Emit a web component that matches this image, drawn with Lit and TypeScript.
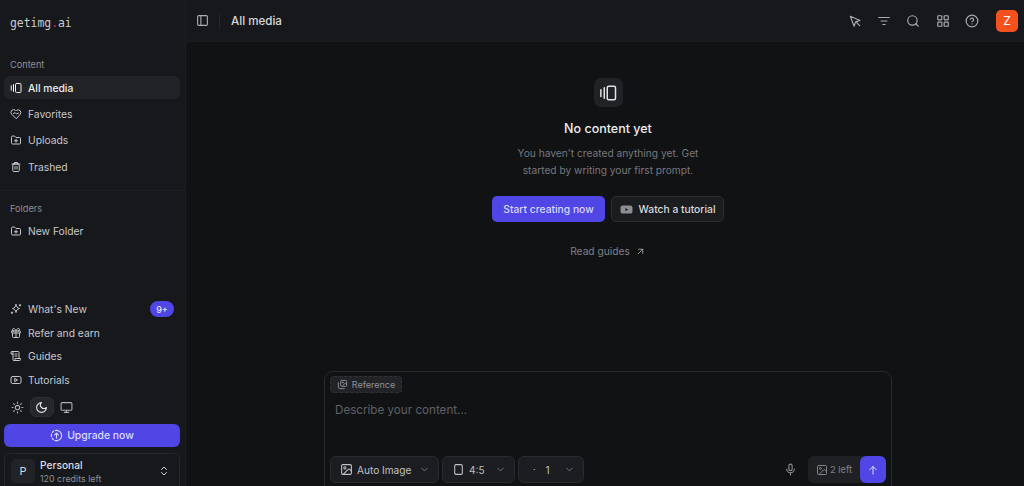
import { LitElement, html, css, svg } from 'lit';
import { customElement } from 'lit/decorators.js';

const icon = (body: unknown, size = 16) => html`<svg class="ic" width=${size} height=${size} viewBox="0 0 24 24" fill="none" stroke="currentColor" stroke-width="2" stroke-linecap="round" stroke-linejoin="round">${body}</svg>`;

const icons = {
  media: svg`<rect x="11" y="3" width="11" height="18" rx="2"/><path d="M7 5v14M2.500 7.500v9"/>`,
  heart: svg`<path d="M12 21 3.500 12.500a5.400 5.400 0 0 1 0-7.600 5.400 5.400 0 0 1 7.600 0l.9.9.9-.9a5.400 5.400 0 0 1 7.600 7.600z"/><path d="m7 11 3-2 3 3 4-2"/>`,
  folder: svg`<path d="M3 6a2 2 0 0 1 2-2h4l3 3h7a2 2 0 0 1 2 2v9a2 2 0 0 1-2 2H5a2 2 0 0 1-2-2z"/><path d="M12 10.500v6M9 13.500h6"/>`,
  trash: svg`<path d="M4 6h16M9 6V3h6v3"/><rect x="5.500" y="6" width="13" height="15" rx="2"/><path d="M10 11v5M14 11v5"/>`,
  spark: svg`<path d="M12 3c.6 4.500 2.500 6.800 7 8-4.500 1.200-6.400 3.500-7 8-.6-4.500-2.500-6.800-7-8 4.500-1.200 6.400-3.500 7-8z"/><path d="M20 3v3M18.500 4.500h3M4 18v3M2.500 19.500h3"/>`,
  gift: svg`<rect x="3" y="8" width="18" height="4" rx="1"/><path d="M12 8v13M5 12v7a2 2 0 0 0 2 2h10a2 2 0 0 0 2-2v-7"/><path d="M7.500 8a2.500 2.500 0 0 1 0-5C10 3 12 8 12 8s2-5 4.500-5a2.500 2.500 0 0 1 0 5"/>`,
  scroll: svg`<path d="M8 21h11a2 2 0 0 0 2-2v-2H10v2a2 2 0 0 1-4 0V5a2 2 0 0 0-4 0v3h4"/><path d="M4 3h12a2 2 0 0 1 2 2v12M10 8h4M10 12h4"/>`,
  play: svg`<rect x="2" y="5" width="20" height="14" rx="3"/><path d="m10 9 5 3-5 3z"/>`,
  playFilled: svg`<rect x="1" y="4.500" width="22" height="15" rx="4" fill="currentColor" stroke="none"/><path d="m10 9 5 3-5 3z" fill="#1b1c20" stroke="none"/>`,
  sun: svg`<circle cx="12" cy="12" r="4"/><path d="M12 2v2M12 20v2M4.900 4.900l1.400 1.400M17.700 17.700l1.400 1.400M2 12h2M20 12h2M6.300 17.700l-1.400 1.400M19.100 4.900l-1.400 1.400"/>`,
  moon: svg`<path d="M12 3a6 6 0 0 0 9 9 9 9 0 1 1-9-9z"/>`,
  monitor: svg`<rect x="2" y="3" width="20" height="14" rx="2"/><path d="M8 21h8M12 17v4"/>`,
  upgrade: svg`<path d="M2.500 12a9.500 9.500 0 0 1 9.500-9.500" stroke-dasharray="3 3"/><path d="M12 2.500a9.500 9.500 0 0 1 0 19"/><path d="M12 21.500a9.500 9.500 0 0 1-9.500-9.500" stroke-dasharray="3 3"/><path d="M12 16.500v-9M8.500 11 12 7.500l3.500 3.500"/>`,
  updown: svg`<path d="m7 9 5-5 5 5M7 15l5 5 5-5"/>`,
  panel: svg`<rect x="3" y="3" width="18" height="18" rx="2"/><path d="M9 3v18"/>`,
  pointer: svg`<path d="M4 4l6.500 17 2.500-7.500L20.500 11z"/><path d="m14 14 6 6"/>`,
  filter: svg`<path d="M3 6h18M7 12h10M10 18h4"/>`,
  search: svg`<circle cx="11" cy="11" r="8"/><path d="m21 21-4.300-4.300"/>`,
  grid: svg`<rect x="3" y="3" width="7" height="7" rx="1"/><rect x="14" y="3" width="7" height="7" rx="1"/><rect x="3" y="14" width="7" height="7" rx="1"/><rect x="14" y="14" width="7" height="7" rx="1"/>`,
  help: svg`<circle cx="12" cy="12" r="10"/><path d="M9.100 9a3 3 0 0 1 5.800 1c0 2-3 3-3 3M12 17h.01"/>`,
  arrowUR: svg`<path d="M7 17 17 7M8 7h9v9"/>`,
  arrowUp: svg`<path d="M12 20V5M5.500 11.500 12 5l6.500 6.500"/>`,
  chevron: svg`<path d="m6 9 6 6 6-6"/>`,
  image: svg`<rect x="3" y="3" width="18" height="18" rx="2"/><circle cx="9" cy="9" r="2"/><path d="m21 15-3.100-3.100a2 2 0 0 0-2.800 0L6 21"/>`,
  images: svg`<rect x="8" y="3" width="13" height="13" rx="2"/><path d="M16 21H6a3 3 0 0 1-3-3V8"/><circle cx="12.500" cy="7.500" r="1"/><path d="m21 12-3-3-6 6"/>`,
  portrait: svg`<rect x="5" y="3" width="14" height="18" rx="2.500"/>`,
  mic: svg`<rect x="9" y="2" width="6" height="12" rx="3"/><path d="M5 11a7 7 0 0 0 14 0M12 18v4"/>`,
};

@customElement('app-root')
export class AppRoot extends LitElement {
  static styles = css`
    :host{
      display: block;
      height: 486px;
      overflow: hidden;
      font-family: Inter, 'Noto Sans', sans-serif;
      color: #e6e7e9;
      background: #111214;
    }

    .ic{ display: block; flex: none; }

    .shell{ display: flex; height: 486px; }

    .side{
      width: 185px;
      flex: none;
      display: flex;
      flex-direction: column;
      background: #17181c;
      border-right: 1px solid #1d1e22;
      overflow: hidden;
    }

    .logo{
      height: 46px;
      padding: 15px 0 0 10px;
      box-sizing: border-box;
      font: 11.400px/16px 'DejaVu Sans Mono', monospace;
      color: #c9cacd;
    }
    .logo span{ color: #c2314f; }

    .group-title{
      font-size: 9.200px;
      line-height: 14px;
      color: #8d8e93;
      padding-left: 10px;
    }

    .nav{ display: flex; flex-direction: column; padding: 4px 5px 0 4px; }
    .item{
      display: flex;
      align-items: center;
      gap: 6px;
      height: 23px;
      margin-bottom: 3.400px;
      padding: 0 6px;
      border-radius: 6px;
      font-size: 10.300px;
      font-weight: 400;
      color: #c6c7ca;
    }
    .item.on{ background: #222327; color: #eceded; font-weight: 500; }

    .content{ padding-top: 12px; }
    .folders{
      margin-top: 8px;
      padding-top: 11px;
      border-top: 1px solid #1e1f23;
    }

    .lower{ margin-top: auto; display: flex; flex-direction: column; margin-bottom: -9px; }
    .lower .nav{ padding-top: 0; }
    .lower .item{ margin-bottom: 0.600px; }

    .badge{
      margin-left: auto;
      width: 24px;
      height: 16px;
      border-radius: 8px;
      background: #4f46e5;
      color: #e8e7fb;
      font-size: 9px;
      font-weight: 500;
      display: flex;
      align-items: center;
      justify-content: center;
    }

    .themes{
      display: flex;
      align-items: center;
      padding: 5px 0 0 5px;
      margin-bottom: 7px;
      color: #aeafb3;
    }
    .themes div{
      width: 24.500px;
      height: 20px;
      display: flex;
      align-items: center;
      justify-content: center;
      border-radius: 6px;
    }
    .themes .on{
      background: #26272b;
      border: 1px solid #2e2f33;
      box-sizing: border-box;
      color: #e6e7e9;
    }

    .upgrade{
      margin: 0 5px 0 4px;
      height: 23px;
      display: flex;
      align-items: center;
      justify-content: center;
      gap: 4px;
      background: #4f46e5;
      border-radius: 6px;
      font-size: 10.400px;
      font-weight: 500;
      color: #dcdafa;
    }

    .account{
      margin: 6px 5px 0 4px;
      height: 42px;
      box-sizing: border-box;
      flex: none;
      display: flex;
      align-items: flex-start;
      gap: 5px;
      padding: 5px 9px 0 6px;
      border: 1px solid #26272b;
      border-radius: 6px;
    }
    .avatar{
      width: 24px;
      height: 24px;
      flex: none;
      display: flex;
      align-items: center;
      justify-content: center;
      background: #222327;
      border-radius: 5px;
      font-size: 11px;
      color: #d5d6d8;
    }
    .who{ flex: 1; }
    .who b{ display: block; font-size: 10.200px; line-height: 13px; font-weight: 500; color: #dcdde0; }
    .who small{ display: block; font-size: 8.900px; line-height: 13px; color: #8d8e93; }
    .account svg{ margin-top: 6px; color: #d0d1d4; }

    .main{
      flex: 1;
      min-width: 0;
      display: flex;
      flex-direction: column;
      position: relative;
    }

    .top{
      height: 42px;
      flex: none;
      display: flex;
      align-items: center;
      padding: 0 6px 0 10px;
      background: #17181c;
      border-bottom: 1px solid #1b1c20;
      box-sizing: border-box;
    }
    .top .sep{ width: 1px; height: 14px; background: #25262a; margin: 0 11px 0 10px; }
    .top h1{ margin: 0; font-size: 11.600px; font-weight: 500; color: #d8d9dc; }
    .top .panel{ color: #adaeb2; }
    .tools{ margin-left: auto; display: flex; align-items: center; gap: 15.200px; color: #a9aaae; }
    .z{
      width: 22px;
      height: 22px;
      margin-left: 2px;
      border-radius: 5px;
      background: #f4511e;
      color: #fff;
      font-size: 12px;
      font-weight: 400;
      display: flex;
      align-items: center;
      justify-content: center;
    }

    .empty{
      flex: 1;
      display: flex;
      flex-direction: column;
      align-items: center;
      padding-top: 36px;
      padding-left: 6px;
    }
    .empty .tile{
      width: 29px;
      height: 29px;
      border-radius: 7px;
      background: #212226;
      display: flex;
      align-items: center;
      justify-content: center;
      color: #e2e3e5;
    }
    .empty h2{
      margin: 12px 0 0;
      font-size: 12.500px;
      line-height: 20px;
      font-weight: 500;
      color: #ececee;
    }
    .empty p{
      margin: 6px 0 0;
      width: 200px;
      text-align: center;
      font-size: 10.200px;
      line-height: 17px;
      color: #77787d;
    }
    .actions{ display: flex; gap: 6px; margin-top: 17px; }
    .btn{
      height: 26px;
      box-sizing: border-box;
      display: flex;
      align-items: center;
      justify-content: center;
      gap: 6px;
      border-radius: 5px;
      font-size: 10.300px;
      font-weight: 500;
    }
    .btn.primary{ width: 113px; background: #4f46e5; color: #d8d6fa; }
    .btn.ghost{ width: 113px; background: #1b1c20; border: 1px solid #2c2d31; color: #d8d9dc; }
    .btn.ghost svg{ color: #8d8e92; }
    .guides{
      display: flex;
      align-items: center;
      gap: 5px;
      margin-top: 23px;
      font-size: 10.200px;
      color: #808186;
    }
    .guides svg{ color: #a0a1a5; }

    .composer{
      flex: none;
      align-self: center;
      width: 568px;
      height: 125px;
      margin: 0 0 -10px 6px;
      box-sizing: border-box;
      padding: 4px 5px 0;
      border: 1px solid #2a2b2f;
      border-radius: 9px;
      background: #111214;
      display: flex;
      flex-direction: column;
      position: relative;
    }
    .ref{
      width: 72px;
      height: 17px;
      box-sizing: border-box;
      display: flex;
      align-items: center;
      justify-content: center;
      gap: 4px;
      border: 1px dashed #313236;
      background: #222327;
      border-radius: 4px;
      font-size: 9px;
      color: #8f9095;
    }
    .prompt{
      margin: 9px 0 0 5px;
      font-size: 11.650px;
      line-height: 16px;
      color: #5f6065;
    }
    .bar{
      position: absolute;
      left: 5px;
      right: 5px;
      top: 84px;
      display: flex;
      align-items: center;
      gap: 3px;
    }
    .pick{
      height: 27px;
      box-sizing: border-box;
      display: flex;
      align-items: center;
      border: 1px solid #2a2b2f;
      background: #1c1d21;
      border-radius: 6px;
      padding: 0 8px 0 9px;
      font-size: 10.100px;
      color: #bfc0c3;
    }
    .pick .label{ margin-left: 4px; }
    .pick .chev{ margin-left: auto; color: #77787d; }
    .mic{ margin-left: auto; margin-right: 8px; color: #8f9095; }
    .send{
      display: flex;
      height: 27px;
      align-items: stretch;
      background: #1f2024;
      border-radius: 6px;
      font-size: 9.300px;
      color: #808186;
    }
    .left{ display: flex; align-items: center; gap: 2px; width: 52px; padding-left: 8px; box-sizing: border-box; }
    .go{
      width: 26px;
      display: flex;
      align-items: center;
      justify-content: center;
      background: #4f46e5;
      border-radius: 6px;
      color: #e0dffb;
    }
    .dot{ font-size: 9px; margin-left: 5px; }
    .pick .count{ margin-left: 10px; }
  `;

  navItem(ic: unknown, label: string, on = false, badge = '') {
    return html`<div class="item ${on ? 'on' : ''}">
      ${icon(ic, 12)}<span>${label}</span>
      ${badge ? html`<span class="badge">${badge}</span>` : ''}
    </div>`;
  }

  render() {
    return html`
      <div class="shell">
        <aside class="side">
          <div class="logo">getimg<span>.</span>ai</div>
          <div class="content">
            <div class="group-title">Content</div>
            <div class="nav">
              ${this.navItem(icons.media, 'All media', true)}
              ${this.navItem(icons.heart, 'Favorites')}
              ${this.navItem(icons.folder, 'Uploads')}
              ${this.navItem(icons.trash, 'Trashed')}
            </div>
          </div>
          <div class="folders">
            <div class="group-title">Folders</div>
            <div class="nav">${this.navItem(icons.folder, 'New Folder')}</div>
          </div>
          <div class="lower">
            <div class="nav">
              ${this.navItem(icons.spark, "What's New", false, '9+')}
              ${this.navItem(icons.gift, 'Refer and earn')}
              ${this.navItem(icons.scroll, 'Guides')}
              ${this.navItem(icons.play, 'Tutorials')}
            </div>
            <div class="themes">
              <div>${icon(icons.sun, 13)}</div>
              <div class="on">${icon(icons.moon, 13)}</div>
              <div>${icon(icons.monitor, 13)}</div>
            </div>
            <div class="upgrade">${icon(icons.upgrade, 13)}<span>Upgrade now</span></div>
            <div class="account">
              <div class="avatar">P</div>
              <div class="who"><b>Personal</b><small>120 credits left</small></div>
              ${icon(icons.updown, 12)}
            </div>
          </div>
        </aside>
        <main class="main">
          <header class="top">
            <span class="panel">${icon(icons.panel, 13)}</span>
            <span class="sep"></span>
            <h1>All media</h1>
            <div class="tools">
              ${icon(icons.pointer, 14)}
              ${icon(icons.filter, 14)}
              ${icon(icons.search, 14)}
              ${icon(icons.grid, 14)}
              ${icon(icons.help, 14)}
              <div class="z">Z</div>
            </div>
          </header>
          <section class="empty">
            <div class="tile">${icon(icons.media, 18)}</div>
            <h2>No content yet</h2>
            <p>You haven't created anything yet. Get started by writing your first prompt.</p>
            <div class="actions">
              <div class="btn primary">Start creating now</div>
              <div class="btn ghost">${icon(icons.playFilled, 13)}<span>Watch a tutorial</span></div>
            </div>
            <div class="guides"><span>Read guides</span>${icon(icons.arrowUR, 11)}</div>
          </section>
          <section class="composer">
            <div class="ref">${icon(icons.images, 11)}<span>Reference</span></div>
            <div class="prompt">Describe your content...</div>
            <div class="bar">
              <div class="pick" style="width:109px">${icon(icons.image, 13)}<span class="label">Auto Image</span><span class="chev">${icon(icons.chevron, 11)}</span></div>
              <div class="pick" style="width:73px">${icon(icons.portrait, 13)}<span class="label">4:5</span><span class="chev">${icon(icons.chevron, 11)}</span></div>
              <div class="pick" style="width:66px"><span class="dot">·</span><span class="label count">1</span><span class="chev">${icon(icons.chevron, 11)}</span></div>
              <span class="mic">${icon(icons.mic, 13)}</span>
              <div class="send">
                <div class="left">${icon(icons.image, 12)}<span>2 left</span></div>
                <div class="go">${icon(icons.arrowUp, 12)}</div>
              </div>
            </div>
          </section>
        </main>
      </div>
    `;
  }
}
